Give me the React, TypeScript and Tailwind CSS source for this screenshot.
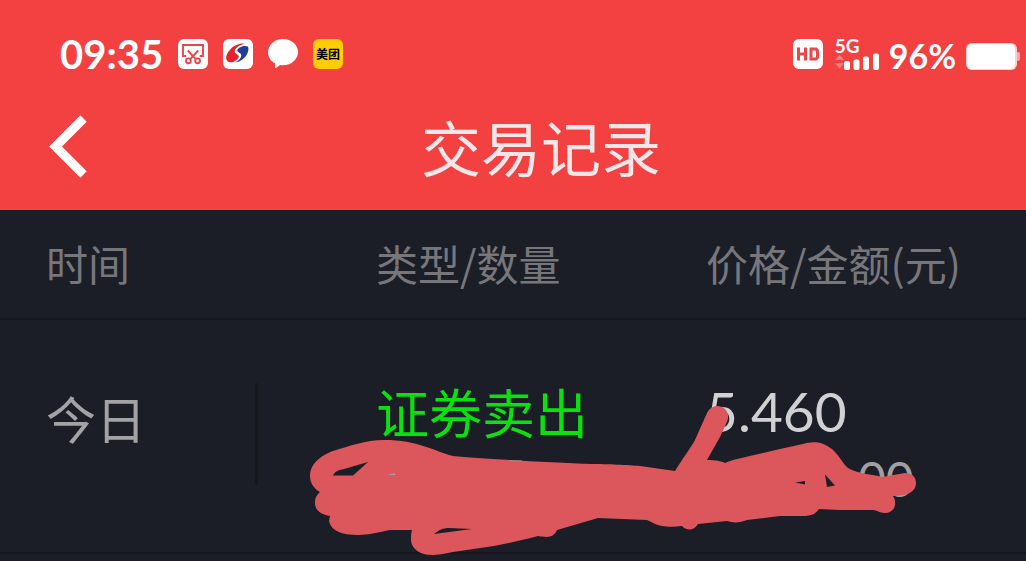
import React from "react";

const cjk = "font-['Noto_Sans_CJK_SC',sans-serif]";
const latin = "font-['Lato','Noto_Sans_CJK_SC',sans-serif]";

function ScreenshotIcon() {
  return (
    <svg className="size-[30px]" viewBox="0 0 30 30" fill="none" aria-hidden="true">
      <rect width="30" height="30" rx="6" fill="#fff" />
      <g stroke="#e8484a" strokeWidth="1.9">
        <path d="M8.200 17H5V6h20v11h-3.200" />
        <path d="M9.800 11.500l8.200 8.800M20.200 11.500L12 20.300" />
        <circle cx="10.400" cy="21.800" r="2.400" />
        <circle cx="19.600" cy="21.800" r="2.400" />
      </g>
    </svg>
  );
}

function BankIcon() {
  return (
    <svg className="size-[30px]" viewBox="0 0 30 30" aria-hidden="true">
      <rect width="30" height="30" rx="6" fill="#fff" />
      <path d="M22.5 4.6C16 4 10.5 6.400 6.500 11.200C2.600 16 1.800 21.200 6 23C9.500 24.200 14 21.500 15.600 18.500C16.800 15.800 12.500 15.500 11.800 13.300C11 9.500 16 6 22.500 4.600Z" fill="#e6212d" />
      <path d="M24.800 7.500C20.500 5.600 14.500 8.800 14.200 11.600C14.200 13.800 18.500 13.600 18.300 16.800C18 19.600 15.300 21.800 12.300 23.400C17.500 22.600 22.300 18.900 24.400 14.400C25.700 11.400 25.800 9 24.800 7.500Z" fill="#233f93" />
    </svg>
  );
}

function ChatIcon() {
  return (
    <svg className="size-[30px]" viewBox="0 0 30 30" aria-hidden="true">
      <path d="M15 0C23.500 0 30 5.800 30 13S23.500 26.200 15 26.200c-1 0-2 0-3-.2L8 28.900c-.6.300-1 0-1-.6v-4.100C2.800 22 0 18 0 13.400 0 6 6.500 0 15 0Z" fill="#fff" />
    </svg>
  );
}

function HdIcon() {
  return (
    <svg className="size-[30px]" viewBox="0 0 30 30" fill="none" aria-label="HD" role="img">
      <rect width="30" height="30" rx="6" fill="#fff" />
      <g stroke="#e8484a" strokeWidth="3">
        <path d="M5.500 8.500v13M12.500 8.500v13M5.500 15h7" />
        <path d="M18 10h5l1.500 1.500v7L23 20h-5Z" />
      </g>
    </svg>
  );
}

function SignalIcon() {
  return (
    <svg className="h-[17px] w-[46px]" viewBox="0 0 46 17" aria-hidden="true">
      <path d="M0 7L4.500 1.500L9 7ZM0 10H9L4.500 16Z" fill="#f77c7c" />
      <g fill="#fff">
        <rect x="9" y="8" width="6" height="9" rx="2" />
        <rect x="18.500" y="6.500" width="6" height="10.500" rx="2" />
        <rect x="28" y="3.500" width="6" height="13.500" rx="2" />
        <rect x="38" y="0.500" width="6" height="16.500" rx="2" />
      </g>
    </svg>
  );
}

function BatteryIcon() {
  return (
    <svg className="h-[27px] w-[54px]" viewBox="0 0 54 27" aria-hidden="true">
      <rect x="49" y="9" width="5" height="9" rx="2" fill="#f9a5a5" />
      <rect width="51" height="27" rx="6" fill="#fbd0d0" />
      <rect x="1" y="1" width="48" height="25" rx="5" fill="#fff" />
    </svg>
  );
}

function StatusBar() {
  return (
    <div className={`${latin} flex h-[86px] items-end justify-between pb-4 pl-[60px] pr-[6px] text-white`}>
      <div className="flex h-8 items-center gap-[15px]">
        <time className="text-[40px] font-bold leading-8">09:35</time>
        <ScreenshotIcon />
        <BankIcon />
        <ChatIcon />
        <span className={`${cjk} flex size-[30px] items-center justify-center rounded-md bg-[#ffcc06] text-xs font-bold leading-none text-black`}>
          美团
        </span>
      </div>
      <div className="flex h-8 items-center">
        <HdIcon />
        <div className="ml-3 flex w-[46px] flex-col">
          <span className="text-[19px] font-bold leading-[14px]">5G</span>
          <SignalIcon />
        </div>
        <span className="ml-2 mt-1 text-[34px] font-bold leading-8">96%</span>
        <span className="ml-[10px] mt-1">
          <BatteryIcon />
        </span>
      </div>
    </div>
  );
}

function NavBar() {
  return (
    <div className="grid h-[124px] grid-cols-[1fr_auto_1fr] items-center pb-1 pl-12">
      <button type="button" aria-label="返回" className="w-10">
        <svg className="h-[64px] w-10" viewBox="0 0 40 64" fill="none" aria-hidden="true">
          <path d="M35.500 4.500L7.500 32.500L35.500 60.500" stroke="#fff" strokeWidth="9" />
        </svg>
      </button>
      <h1 className="pl-2 text-[60px] leading-[72px] text-[#f3e6e8]">交易记录</h1>
      <span />
    </div>
  );
}

function RedactionStroke() {
  return (
    <svg className="pointer-events-none absolute left-[300px] top-[190px] h-[160px] w-[630px]" viewBox="300 400 630 160" aria-hidden="true">
      <path
        fill="#db575b"
        fillRule="evenodd"
        d="M310 476C310 463 322 455 333 451C350 446 365 440 384 440C418 440 434 451 453 456C480 459 550 462 592 464C605 464 630 465 640 466L675 471C683 458 690 449 695 440L707 413C711 405 719 404 725 409C729 414 729 418 726 424L720 437L707 460C716 460 721 461 725 463C729 461 733 460 737 459L780 449L803 444C812 441 822 441 832 449C839 455 843 464 848 468C858 474 872 474 882 477L905 473C912 473 916 477 916 483C916 490 910 494 904 495L893 496C898 504 894 513 885 513C879 513 877 510 873 510H840L819 509C815 514 812 516 803 516H780L747 520C740 523 733 523 727 521L698 524C694 531 686 531 682 526C675 527 667 527 662 526C656 525 652 522 647 520L598 518L557 530C554 537 549 538 538 536C520 541 500 545 487 547L453 552C444 554 437 555 432 555C420 555 412 549 411 541C411 536 411 533 412 530H390C379 532 369 535 358 535C342 535 331 531 329 521L330 516C320 514 315 510 315 503C315 497 317 495 320 492C313 488 310 482 310 476Z
        M333 475.500C335 471 339 470 344 469L368 462L353 475.500Z
        M434 534C439 530 443 528 449 528L472 529Z
        M795 482.500L805 481V484.500Z
        M825 474.500L835 485.500L827 487Z"
      />
      <path d="M387 475L392 474L394 473L396 475ZM509 460.500h13v.800h-13Z" fill="#a6a2a5" />
    </svg>
  );
}

export default function App() {
  return (
    <main className={`${cjk} min-h-screen overflow-x-hidden bg-[#1c1e27]`}>
      <header className="bg-[#f34141]">
        <StatusBar />
        <NavBar />
      </header>
      <section className="relative">
        <table className="w-full table-fixed border-collapse text-left">
          <colgroup>
            <col className="w-[330px]" />
            <col className="w-[330px]" />
            <col />
          </colgroup>
          <thead>
            <tr className="h-[109px] whitespace-nowrap border-b-2 border-[#16161d] text-[42px] leading-[60px] text-[#77777b]">
              <th className="pb-0.5 pl-[46px] font-normal">时间</th>
              <th className="pb-0.5 pl-[46px] font-normal">类型/数量</th>
              <th className="pb-0.5 pl-[46px] font-normal">价格/金额(元)</th>
            </tr>
          </thead>
          <tbody>
            <tr className="h-[234px] whitespace-nowrap border-b-2 border-[#16161d] align-top">
              <td className="pl-[46px] pt-[63px]">
                <div className="mr-[72px] flex h-[102px] items-start border-r-[3px] border-[#15171b] text-[50px] leading-[68px] text-[#a3a3a6]">
                  今日
                </div>
              </td>
              <td className="pl-[46px] pt-[53px] text-[53px] leading-[76px] text-[#0be10f]">证券卖出</td>
              <td className={`${latin} pl-[46px] pt-[53px] text-[#d1d1d3]`}>
                <div className="text-[55px] leading-[76px]">5.460</div>
                <div className="pl-[152px] text-[48px] leading-[60px] text-[#a0a0a3]">00</div>
              </td>
            </tr>
          </tbody>
        </table>
        <RedactionStroke />
      </section>
    </main>
  );
}
